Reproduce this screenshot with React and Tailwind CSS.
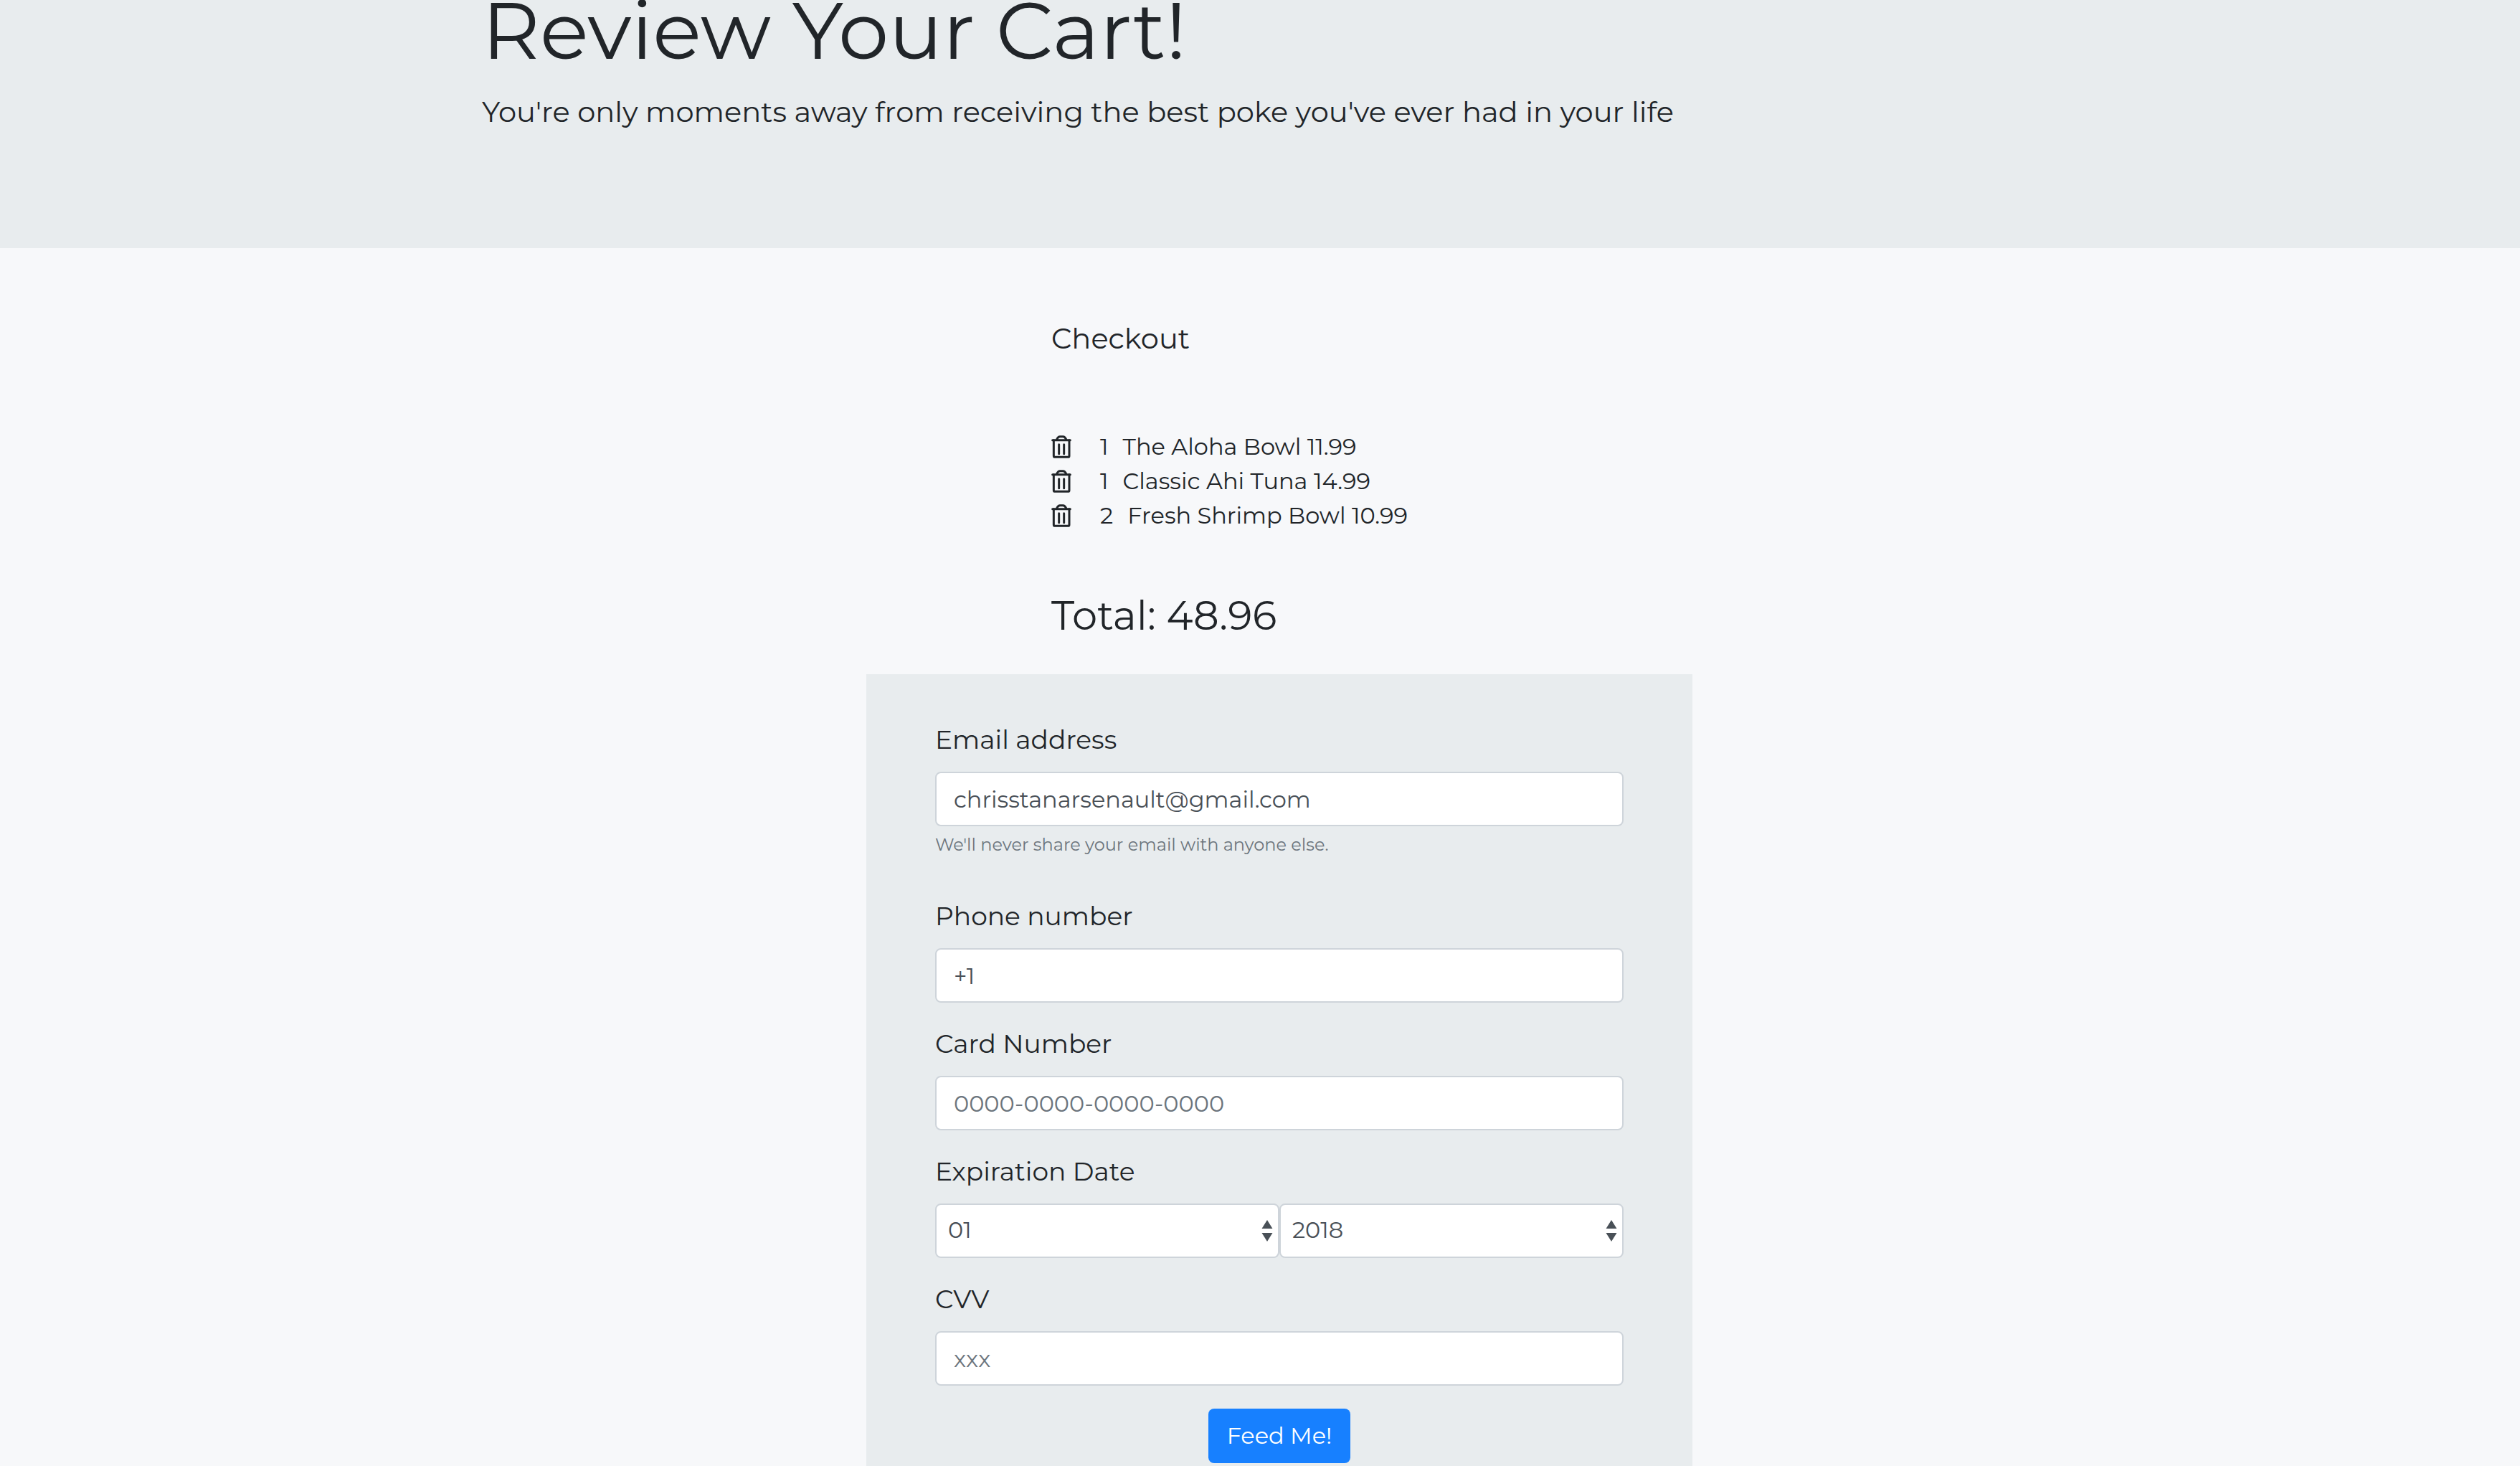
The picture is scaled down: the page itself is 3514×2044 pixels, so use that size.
const items = [
  { qty: 1, name: "The Aloha Bowl", price: "11.99" },
  { qty: 1, name: "Classic Ahi Tuna", price: "14.99" },
  { qty: 2, name: "Fresh Shrimp Bowl", price: "10.99" },
];

const months = ["01", "02", "03", "04", "05", "06", "07", "08", "09", "10", "11", "12"];
const years = ["2018", "2019", "2020", "2021", "2022", "2023"];

function TrashIcon() {
  return (
    <svg viewBox="0 0 84 96" className="h-8 w-7" fill="none" stroke="currentColor" strokeWidth="9" strokeLinecap="round" strokeLinejoin="round" aria-hidden="true">
      <path d="M5 20H79" />
      <path d="M10 20V86Q10 91 16 91H69Q75 91 75 86V20" />
      <path d="M23 17Q28 5 36 5H49Q57 5 62 17" />
      <path d="M32 38V77M53 38V77" />
    </svg>
  );
}

function Field({ id, label, help, ...input }) {
  return (
    <div className="mb-[30px]">
      <label htmlFor={id} className="mb-[18px] block text-4xl leading-[54px]">
        {label}
      </label>
      <input
        id={id}
        className="block h-[76px] w-full rounded-lg border-2 border-[#ced4da] bg-white px-6 text-[32px] text-[#495057] placeholder:text-[#6c757d] placeholder:opacity-100"
        {...input}
      />
      {help && <p className="mt-2 pb-6 text-2xl leading-9 text-[#6c757d]">{help}</p>}
    </div>
  );
}

function Picker({ label, options }) {
  return (
    <div className="relative flex-1">
      <select
        aria-label={label}
        className="block h-[76px] w-full appearance-none rounded-lg border-2 border-[#ced4da] bg-white px-4 pb-0.5 text-[32px] text-[#495057]"
      >
        {options.map((o) => (
          <option key={o}>{o}</option>
        ))}
      </select>
      <svg viewBox="0 0 16 30" className="pointer-events-none absolute top-[23px] right-[9px] h-[30px] w-4" fill="#495057" aria-hidden="true">
        <path d="M8 0L15.500 12H0.500zM8 30L0.500 18H15.500z" />
      </svg>
    </div>
  );
}

export default function App() {
  return (
    <div className="min-h-screen bg-[#f7f8fa] font-['Montserrat','Inter',sans-serif] text-[#212529]">
      <header className="bg-[#e8ecee] pb-40">
        <div className="mx-auto max-w-[2170px]">
          <h1 className="text-[112px] leading-[84px]">Review Your Cart!</h1>
          <p className="mt-[42px] text-[40px] leading-[60px]">
            You're only moments away from receiving the best poke you've ever had in your life
          </p>
        </div>
      </header>

      <main className="pt-[102px] pl-[54px]">
        <section className="mx-auto max-w-[636px]">
          <h2 className="text-[40px] leading-[48px]">Checkout</h2>
          <ul className="mt-[103px]">
            {items.map((item) => (
              <li key={item.name} className="flex items-center text-[32px] leading-[48px]">
                <button type="button" aria-label={`Remove ${item.name}`} className="mr-10">
                  <TrashIcon />
                </button>
                <span className="mr-5">{item.qty}</span>
                <span>
                  {item.name} {item.price}
                </span>
              </li>
            ))}
          </ul>
          <p className="mt-[81px] text-[56px] leading-[68px]">Total: 48.96</p>
        </section>

        <form className="mx-auto mt-12 max-w-[1152px] bg-[#e8ecee] px-24 pt-16 pb-1">
          <Field id="email" label="Email address" type="email" defaultValue="chrisstanarsenault@gmail.com" help="We'll never share your email with anyone else." />
          <Field id="phone" label="Phone number" type="tel" defaultValue="+1" />
          <Field id="card" label="Card Number" type="text" placeholder="0000-0000-0000-0000" />
          <fieldset className="mb-[30px]">
            <legend className="mb-[18px] text-4xl leading-[54px]">Expiration Date</legend>
            <div className="flex">
              <Picker label="Expiration month" options={months} />
              <Picker label="Expiration year" options={years} />
            </div>
          </fieldset>
          <Field id="cvv" label="CVV" type="text" placeholder="xxx" />
          <div className="flex justify-center pt-0.5">
            <button type="submit" className="h-[76px] rounded-lg bg-[#1780ff] px-[26px] text-[32px] text-white">
              Feed Me!
            </button>
          </div>
        </form>
      </main>
    </div>
  );
}
